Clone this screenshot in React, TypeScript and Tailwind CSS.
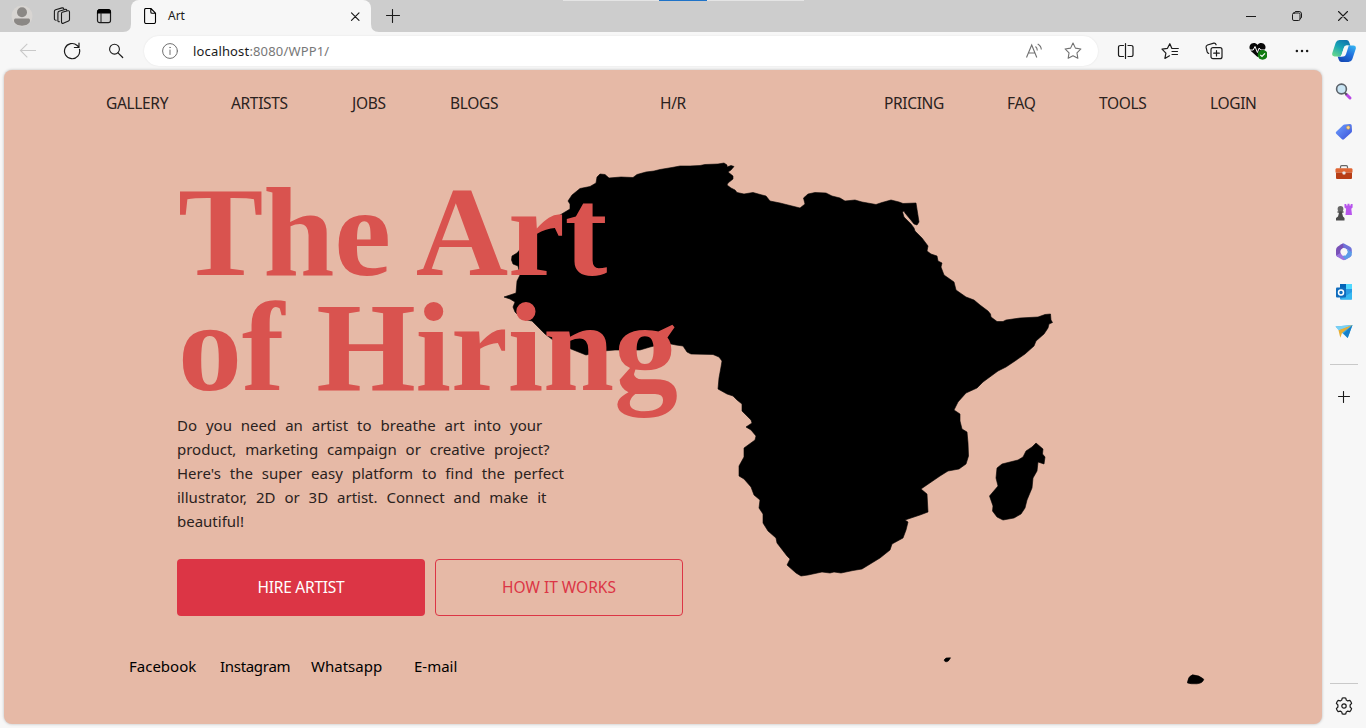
import type { ReactNode } from "react";

const AFRICA =
  "M597 177L600 174L605 174.5L609 178L621 177L633 177.5L637 174.5L646 172L654 171L660 169.5L672 167.5L680 166L690 166L700 165.5L705 164.5L718 164L724 163L727 165L727 167L731 165.5L734 166.5L731 170L728 172L733 176L733 179L728 183L727 185L731 188L735 190L737 192.5L744 194L753 192.5L762 195L766 196L770 201L780 203L792 206L800 208L805 204L803.5 198L808 194L815 192.5L826 193L832 196L840 198L845 201L855 200L862 202L876 204.5L882 202.5L891 200L899 202L903 203.5L916 203L919 222L917 225L914 224L910 219L905 213L904 211L902.5 212L904 217L911 224L914 228L915 231L922 238L928 246L927 251L931 254L937 256L938 261L942 263L941 267L944 275L954 282L956 290L966 297L974 300L980 305L988 311L990.5 314L991 317L997 321.5L1003 321.5L1006 320L1020 318L1038 317L1045 314.5L1050.5 314L1051 320L1052.5 322.5L1049 324L1048 328L1044 334L1036 341L1034 346L1025 354L1015 361L1006 367L998 371L983 382L977 388L966 393L958 402L954 410L960 414L960 421L962 429L967 432L968 443L968.5 456L966 464L959 469L948 471L940 476L921 489L927 494L928 512L920 515L905 520L908 522L906 530L903 538L892 544L890 550L880 558L862 569L853 570.5L841 573L834 572L830 573L822 572L808 575L801 576L796 573L787 565L790 559L787 556L777 543L776 538L768 531L763 523L763 514L759 508L760 500L754 495L751 487L744 479L739 476L739 466L744 457L744 448L755 440L756 436L751 430L746 427L752 423L751 420L742 411L742 404L737 400L733 396L727 394L718 389L719 378L721 367L722 361L719 357L713 354.5L691 354L687 352L683 346L676 345L666 343L650 347L640 350L615 350L603 351L586 355L571 349L553 340L545 334L532 321L522 319L515 312L513 307L515 302L510 299L504 297L510 295L516 293L517 281L520 275L518 266L513 264L511.5 260L512 256L517 253L528 240L540 228L555 218L565 212L570 209L570 204L568 201L572 195L580 188.5L590 186.5L596 183Z";
const MADAGASCAR =
  "M1032 447L1036 443L1043 449L1042.5 454L1045 457L1044 464L1038 462L1037 471L1033 478L1032 488L1027 500L1025 508L1021 514L1014 518L1003 520L997 517L992.5 511L993 506L989.5 496L998 486L996 478L997 468L1002 464L1018 460L1023 457L1026 451Z";

const STAR = "M10 1.2l2.700 5.600 6.100.9-4.400 4.300 1 6.100L10 15.200l-5.400 2.900 1-6.100-4.400-4.300 6.100-.9z";

function Svg({ size = 16, box = "0 0 16 16", children }: { size?: number; box?: string; children: ReactNode }) {
  return (
    <svg width={size} height={size} viewBox={box} fill="none" stroke="#1b1b1b" strokeWidth="1" strokeLinecap="round" strokeLinejoin="round" className="shrink-0">
      {children}
    </svg>
  );
}

function Slot({ children }: { children: ReactNode }) {
  return <button className="flex h-9 w-11 shrink-0 items-center justify-center">{children}</button>;
}

function TitleBar() {
  return (
    <div className="relative flex h-8 shrink-0 bg-[#cdcdcd]">
      <div className="absolute left-[563px] top-0 h-px w-[241px] bg-[#e4e4e4]" />
      <div className="absolute left-[659px] top-0 h-px w-12 bg-[#1f73c8]" />
      <div className="flex w-[131px] shrink-0 items-center pl-[11px]">
        <svg width="22" height="22" viewBox="0 0 22 22">
          <circle cx="11" cy="11" r="10.5" fill="#d8d5d2" />
          <circle cx="11" cy="7.3" r="5" fill="#8b8885" />
          <path d="M3 15.500C3 13.800 4 13.500 5.300 13.500h11.400c1.300 0 2.300.3 2.300 2 0 3.300-4 5.200-8 5.200s-8-1.900-8-5.200z" fill="#8b8885" />
        </svg>
        <div className="ml-[20px] flex">
          <Svg size={18} box="0 0 18 18">
            <path d="M9.200 5.300l5.500-1.500c1-.3 1.800.2 1.800 1.200v7.400c0 .7-.3 1.200-1 1.500l-5.200 2.300c-.9.4-1.800-.1-1.800-1.100V6.900c0-.8.1-1.400.7-1.600zM6.500 14.800c-1 .1-1.600-.3-1.600-1.300V6c0-.9.4-1.400 1.200-1.700L12 2.400c.9-.3 1.500 0 1.800.8M3.200 13.200c-1 .1-1.800-.4-1.800-1.400V4.300c0-.9.4-1.300 1.200-1.600L9 .9c.9-.2 1.500 0 1.800.8" strokeWidth="1.1" />
          </Svg>
        </div>
        <div className="ml-[25px]">
          <Svg size={16}>
            <rect x="1.5" y="1.7" width="13" height="13" rx="2.2" strokeWidth="1.2" />
            <path d="M1.500 5V3.500Q1.500 1.500 4 1.500h8Q14.500 1.500 14.500 4v1h-13z" fill="#000" stroke="#000" />
            <path d="M5 5v9.500" />
          </Svg>
        </div>
      </div>
      <div className="relative flex h-8 w-60 shrink-0 items-center rounded-t-lg bg-[#f7f7f7] pl-[11px]">
        <svg className="absolute bottom-0 -left-2" width="8" height="8"><path d="M8 0v8H0Q8 8 8 0z" fill="#f7f7f7" /></svg>
        <svg className="absolute -right-2 bottom-0" width="8" height="8"><path d="M0 0v8h8Q0 8 0 0z" fill="#f7f7f7" /></svg>
        <Svg>
          <path d="M2.600 1.800Q2.600.5 4 .5h4.900l4.600 4.600v9Q13.500 15.500 12 15.500H4Q2.600 15.500 2.600 14zM8.800.7v3.200q0 1.300 1.300 1.300h3.200" stroke="#000" strokeWidth="1.1" />
        </Svg>
        <span className="ml-[10px] w-[181px] text-[12px] leading-4 text-[#1b1b1b]">Art</span>
        <Svg size={12} box="0 0 12 12">
          <path d="M2.500 2.900l7.500 7.500M10 2.900l-7.500 7.500" strokeWidth="1.2" />
        </Svg>
      </div>
      <div className="flex w-[43px] shrink-0 items-center justify-center">
        <Svg size={14} box="0 0 14 14"><path d="M6.500 .5v13M.5 6.500h13" strokeWidth="1.1" /></Svg>
      </div>
      <div className="ml-auto flex">
        <div className="flex w-[46px] items-center justify-center"><Svg size={10} box="0 0 10 10"><path d="M0 5.500h10" strokeLinecap="butt" /></Svg></div>
        <div className="flex w-[46px] items-center justify-center">
          <Svg size={10} box="0 0 10 10"><rect x=".5" y="2" width="7.5" height="7.5" rx="1.4" /><path d="M2.500 2V1.700Q2.800.5 4 .5h3Q9.500.5 9.500 3v3q0 1.300-1.300 1.600" /></Svg>
        </div>
        <div className="flex w-[46px] items-center justify-center"><Svg size={10} box="0 0 10 10"><path d="M.5.5l9 9M9.500.5l-9 9" strokeWidth="1.1" /></Svg></div>
      </div>
    </div>
  );
}

function Copilot() {
  const leaf = "M7.500 1H14.500q2 0 2.600 2l1.300 3.600h-3.800q-2 0-2.600 2l-2.400 7.200q-.5 1.600-2.200 1.600H2.500Q-.6 17.400.3 14L3.700 3.800Q4.700 1 7.500 1z";
  return (
    <svg width="24" height="24" viewBox="0 0 24 24" className="-ml-[2px]">
      <defs>
        <linearGradient id="cpA" x1=".7" y1="0" x2=".1" y2="1"><stop offset="0" stopColor="#1076ae" /><stop offset=".45" stopColor="#18a5b5" /><stop offset="1" stopColor="#6bd98a" /></linearGradient>
        <linearGradient id="cpB" x1=".7" y1="0" x2=".1" y2="1"><stop offset="0" stopColor="#1449b5" /><stop offset=".5" stopColor="#2270dd" /><stop offset="1" stopColor="#36b5f2" /></linearGradient>
      </defs>
      <path d={leaf} transform="rotate(180 12 12)" fill="url(#cpB)" />
      <path d={leaf} fill="url(#cpA)" />
      <path d="M14.600 6.600h2.200L14 15.200q-.7 2.200-2.600 2.200H7.400q1.700-.1 2.200-1.600L12 8.600q.6-2 2.600-2z" fill="#f7f7f7" />
    </svg>
  );
}

function Toolbar() {
  return (
    <div className="flex h-[38px] shrink-0 items-center pl-[6px]">
      <Slot>
        <svg width="18" height="16" viewBox="0 0 18 16" fill="none" stroke="#c9c9c9" strokeWidth="1.1"><path d="M17 7.500H1.500M8.300.8L1.500 7.500l6.800 6.800" /></svg>
      </Slot>
      <Slot>
        <Svg size={18} box="0 0 18 18"><path d="M16.500 7.400A7.600 7.600 0 1 1 14.200 3.500L16 5.200M16 1v4.500h-4.600" strokeWidth="1.2" /></Svg>
      </Slot>
      <Slot>
        <Svg><circle cx="6.500" cy="6.200" r="4.900" strokeWidth="1.1" /><path d="M10 9.800l4.700 4.700" strokeWidth="1.200" /></Svg>
      </Slot>
      <div className="mr-[6px] ml-[6px] flex h-[30px] w-[954px] shrink-0 items-center rounded-full bg-white pr-[16px] pl-[18px] shadow-[0_0_2px_rgba(0,0,0,0.09)]">
        <Svg><circle cx="8" cy="8" r="7.400" stroke="#707070" /><path d="M8 7v4.500" stroke="#707070" /><circle cx="8" cy="4.500" r=".5" fill="#707070" stroke="#707070" strokeWidth=".4" /></Svg>
        <span className="ml-[15px] text-[13px] leading-5 tracking-[0.16px] whitespace-nowrap text-[#1b1b1b]">localhost<span className="text-[#777]">:8080/WPP1/</span></span>
        <div className="ml-auto flex items-center gap-[21px]">
          <svg width="18" height="16" viewBox="0 0 18 16" fill="none" stroke="#707070" strokeWidth="1.1"><path d="M1.500 14.500L6.700 2l5.100 12.500M3.300 10h6.800M10.500 3.500q1.800 1.400 1.800 4M12.700 1q3.500 2 3.600 5.500" /></svg>
          <svg width="18" height="18" viewBox="0 0 20 20" fill="none" stroke="#707070" strokeWidth="1.200" strokeLinejoin="round"><path d={STAR} /></svg>
        </div>
      </div>
      <Slot>
        <Svg size={18} box="0 0 18 18"><path d="M6.500 3.500h-3Q1.500 3.500 1.500 5.300v7.400q0 1.800 2 1.800h3M11 3.500h3q2 0 2 1.800v7.400q0 1.800-2 1.800h-3M8.500 1.500v15" strokeWidth="1.200" /></Svg>
      </Slot>
      <Slot>
        <Svg size={18} box="0 0 18 18"><path d="M10.900 6.500L8.800 1.700 6.500 6.300 1 7.100l3.900 4-1 5.300 4.600-2.600M11.500 6.500h5.800M11 9.500h5.500M11 12.500h5.500" strokeWidth="1.200" /></Svg>
      </Slot>
      <Slot>
        <Svg size={18} box="0 0 18 18"><rect x="6" y="5.700" width="11" height="11" rx="2" strokeWidth="1.200" /><path d="M11.500 8.500v5.500M8.700 11.200h5.600M3.700 11.500Q2.500 11 2.100 9.700L1.100 5.400Q.8 3.600 2.500 3L8.800 1.200q1.700-.3 2.300 1.600" strokeWidth="1.200" /></Svg>
      </Slot>
      <Slot>
        <svg width="18" height="18" viewBox="0 0 18 18">
          <path d="M8.500 3C6.500.3 2.500.6 1 3.300c-1.500 2.900.4 5.200 2 6.700l5.500 5 5.500-5c1.600-1.500 3.500-3.900 2-6.700-1.500-2.700-5.500-3-7.500-.3z" fill="#080808" />
          <path d="M.5 8h3.700L6 4.500l2.400 6L10.200 6l1.500 2h5" fill="none" stroke="#fff" strokeWidth="1" />
          <circle cx="13.600" cy="12.800" r="4.900" fill="#107c10" /><path d="M11.300 12.900l1.700 1.600 3-3.200" fill="none" stroke="#fff" strokeWidth="1.200" />
        </svg>
      </Slot>
      <Slot>
        <svg width="14" height="4" viewBox="0 0 14 4" fill="#1b1b1b"><circle cx="1.900" cy="2" r="1.250" /><circle cx="7" cy="2" r="1.250" /><circle cx="12.100" cy="2" r="1.250" /></svg>
      </Slot>
      <div className="ml-auto flex w-11 justify-center"><Copilot /></div>
    </div>
  );
}

const SIDE_ICONS: ReactNode[] = [
  <>
    <path d="M11.500 11.500l3.500 3.500" stroke="#b947e5" strokeWidth="3" strokeLinecap="round" />
    <path d="M9.800 9.800l2 2" stroke="#555b62" strokeWidth="2" />
    <circle cx="6.500" cy="6" r="4.900" fill="#c9e5f4" stroke="#5c636b" strokeWidth="1.600" />
  </>,
  <>
    <defs><linearGradient id="tagG" x1="0" y1="0" x2="1" y2="1"><stop stopColor="#6fa2ff" /><stop offset="1" stopColor="#3b4fd8" /></linearGradient></defs>
    <path d="M9.500 1.500L15 .9q1.700 0 1.700 1.700L17 8q0 1-.8 1.700L9 16.200q-1 .9-2 0L1.200 10.800q-1-1 0-2L8 2.200q.6-.6 1.500-.7z" fill="url(#tagG)" />
    <circle cx="13.200" cy="4.600" r="1.800" fill="#ffd78a" stroke="#b38b4d" strokeWidth=".6" />
  </>,
  <>
    <path d="M5.500 5.500V4Q5.500 2.700 6.700 2.700h4.600q1.200 0 1.200 1.300v1.500" fill="none" stroke="#666" strokeWidth="1.200" />
    <path d="M1.500 5.300h15Q17.500 5.500 17.500 6.500v3H.5v-3q0-1 1-1.200z" fill="#df6533" /><path d="M1 9.500h16V15q0 1-1 1H2q-1 0-1-1z" fill="#b83e16" />
    <rect x="7.500" y="8.500" width="3" height="3" rx=".7" fill="#e8e8e8" />
  </>,
  <>
    <path d="M9.500 1h1.800v1.400h1.200V.7h2v1.700h1.200V1h1.900v3.500l-1.300 1.200.7 6.300h-6.500l.6-6.300-1.600-1.200z" fill="#b855ed" />
    <circle cx="5.500" cy="6" r="2.900" fill="#666" /><path d="M2.500 8.300h6v1.500H7l1 3.700 1.500 1.400v2.600h-8.500v-2.600L3 13.500l1-3.700H2.500z" fill="#4b4b4b" />
  </>,
  <>
    <path d="M8.500 .3L15 3.800q1.800 1 1.800 3v3.500l-4.300-3.500L8.500 4.800 4.900 7.500 4.700 1.900z" fill="#6f72d9" />
    <path d="M8 .5L2.800 3.500Q1 4.700 1 7v4.200q0 2 1.700 2.900l3.500-3.800-.8-3.500L8.600 4.700z" fill="#7951b7" />
    <path d="M1.300 12.500l4-2.400 3.200 2.700 4.300-2.600 3.800 1.500q-.3 1.600-1.700 2.500l-4.500 2.600q-1.500.8-3 0L2.700 14z" fill="#9a74e0" />
    <path d="M12.200 6.400L16.800 9v2q0 2-1.700 3l-4.700 2.700-2.700-3.500L12 10.500z" fill="#5a9be8" />
    <path d="M7.200 5.600h3.600L12.800 9l-2 3.400H7.200L5.200 9z" fill="#f7f7f7" />
  </>,
  <>
    <rect x="5" y="1" width="12" height="15.500" rx="1" fill="#2a9be4" /><path d="M11 1h6v5h-6z" fill="#50d9ff" /><path d="M5 1h6v5H5z" fill="#0364b8" /><path d="M17 9v7.500H5z" fill="#35b8f1" />
    <rect x="1" y="4.500" width="10" height="10" rx="1" fill="#0f6cbd" /><circle cx="6" cy="9.500" r="2.500" fill="none" stroke="#fff" strokeWidth="1.500" />
  </>,
  <>
    <path d="M.5 3.500L17.500 2l-4.800 13-5-4.500z" fill="#36a9e6" /><path d="M.5 3.500L17.500 2 4 7.800z" fill="#79d1f5" /><path d="M3.500 7.300L17.500 2 7 10l-1.700 4.700z" fill="#e8ae32" /><path d="M8.500 10.500L17.500 2l-4.800 13z" fill="#1680cb" />
  </>,
];

function Sidebar() {
  return (
    <aside className="flex w-11 shrink-0 flex-col items-center pt-[2px]">
      {SIDE_ICONS.map((icon, i) => (
        <div key={i} className="flex h-10 shrink-0 items-center justify-center"><svg width="18" height="18" viewBox="0 0 18 18">{icon}</svg></div>
      ))}
      <div className="mt-[12px] h-px w-7 shrink-0 bg-[#c9c9c9]" />
      <div className="mt-[26px]"><Svg size={12} box="0 0 12 12"><path d="M5.500 .5v11M.5 5.500h11" strokeWidth="1.100" /></Svg></div>
      <div className="mt-auto h-px w-7 shrink-0 bg-[#c9c9c9]" />
      <div className="mt-[13px] mb-[13px]">
        <Svg size={18} box="0 0 18 18">
          <path d="M7.300 1q1.700-.4 3.400 0l.6 2.100 1.400.8 2.200-.5q1.200 1.300 1.700 3L15.100 8v2l1.500 1.600q-.5 1.700-1.700 3l-2.200-.5-1.400.8-.6 2.100q-1.700.4-3.400 0l-.6-2.100-1.400-.8-2.200.5q-1.200-1.300-1.700-3L2.900 10V8L1.400 6.400q.5-1.700 1.700-3l2.200.5 1.400-.8z" strokeWidth="1.200" />
          <circle cx="9" cy="9" r="2.200" strokeWidth="1.200" />
        </Svg>
      </div>
    </aside>
  );
}

function Page() {
  return (
    <main className="relative ml-1 h-[654px] w-[1318px] shrink-0 overflow-hidden rounded-lg bg-[#e6b9a6] text-[#2b2220] shadow-[0_0_3px_rgba(0,0,0,0.25)]">
      <svg className="absolute top-[80px] left-[496px]" width="720" height="540" viewBox="500 150 720 540" fill="#000" stroke="#000" strokeWidth=".6" strokeLinejoin="round">
        <path d={AFRICA} /><path d={MADAGASCAR} />
        <path d="M944 660l2-2 4.500-.2-1.500 2.500-2 1.500-2-.3z" />
        <path d="M1187.500 682q.5-5.500 5-7.200 7 .3 11.300 4.500-1 4-7 4.500-6 .3-9.300-.8z" />
      </svg>
      <div className="relative flex h-full flex-col">
        <nav className="mt-[21px] flex h-6 shrink-0 pl-[102px] text-[15.5px] leading-6 tracking-[-0.34px] whitespace-nowrap">
          <a className="w-[125px]">GALLERY</a>
          <a className="w-[121px]">ARTISTS</a>
          <a className="w-[98px]">JOBS</a>
          <a className="w-[210px]">BLOGS</a>
          <a className="w-[224px]">H/R</a>
          <a className="w-[123px]">PRICING</a>
          <a className="w-[92px]">FAQ</a>
          <a className="w-[111px]">TOOLS</a>
          <a>LOGIN</a>
        </nav>
        <h1 className="mt-[60px] ml-[174px] h-[230px] font-['Liberation_Serif',serif] text-[128px] leading-[115px] font-bold tracking-[-0.15px] whitespace-nowrap text-[#d9534f]">The Art<br />of Hiring</h1>
        <p className="mt-[8px] ml-[173px] text-[15px] leading-6 [word-spacing:5px] whitespace-nowrap">
          Do you need an artist to breathe art into your<br />
          product, marketing campaign or creative project?<br />
          Here's the super easy platform to find the perfect<br />
          illustrator, 2D or 3D artist. Connect and make it<br />
          beautiful!
        </p>
        <div className="mt-[26px] ml-[173px] flex gap-[10px] text-[15.5px]">
          <button className="h-[57px] w-[248px] rounded bg-[#dc3545] tracking-[-0.25px] text-white">HIRE ARTIST</button>
          <button className="h-[57px] w-[248px] rounded border border-[#dc3545] text-[#dc3545]">HOW IT WORKS</button>
        </div>
        <footer className="mt-[38px] ml-[125px] flex text-[15px] leading-6 whitespace-nowrap text-black">
          <a className="w-[91px]">Facebook</a>
          <a className="w-[91px] tracking-[-0.3px]">Instagram</a>
          <a className="w-[103px]">Whatsapp</a>
          <a>E-mail</a>
        </footer>
      </div>
    </main>
  );
}

export default function App() {
  return (
    <div className="flex h-[728px] w-[1366px] flex-col overflow-hidden bg-[#f7f7f7] font-['Noto_Sans','Open_Sans',sans-serif]">
      <TitleBar />
      <Toolbar />
      <div className="flex min-h-0 flex-1">
        <Page />
        <Sidebar />
      </div>
    </div>
  );
}
